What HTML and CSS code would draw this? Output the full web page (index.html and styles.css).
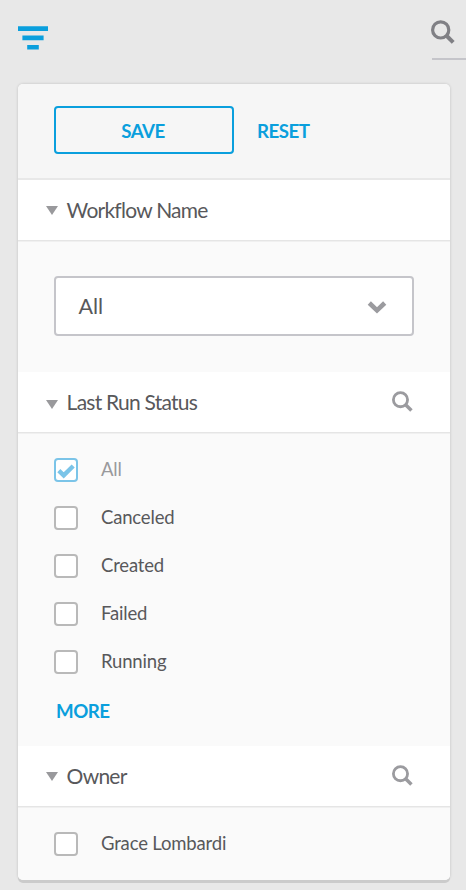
FILE: index.html
```html
<!DOCTYPE html>
<html lang="en">
<head>
<meta charset="utf-8">
<title>Workflow filters</title>
<link rel="stylesheet" href="styles.css">
</head>
<body>
<svg class="sprite" width="0" height="0">
  <symbol id="search" viewBox="0 0 24 24">
    <circle cx="9.7" cy="9.9" r="8.1" fill="none" stroke="currentColor" stroke-width="3.2"/>
    <path d="M15.3 15.5L22.2 22.4" fill="none" stroke="currentColor" stroke-width="4"/>
  </symbol>
  <symbol id="caret" viewBox="0 0 12 9"><path d="M0 0H12L6 9Z" fill="currentColor"/></symbol>
</svg>
<header class="topbar">
  <svg class="filter" viewBox="0 0 30 24"><path d="M0 .3H30V5H0ZM4.4 9.6H25.6V14.2H4.4ZM9.2 19H20.8V23.6H9.2Z" fill="currentColor"/></svg>
  <div class="search-field"><svg class="search-large"><use href="#search"/></svg></div>
</header>
<main class="panel">
  <div class="actions">
    <button class="save"><span>SAVE</span></button>
    <button class="link reset">RESET</button>
  </div>
  <section>
    <h2 class="heading"><svg class="caret"><use href="#caret"/></svg><span>Workflow Name</span></h2>
    <div class="body body-select">
      <div class="select"><span>All</span><svg class="chevron" viewBox="0 0 18 12"><path d="M1.3 2L9 9.4L16.7 2" fill="none" stroke="currentColor" stroke-width="4.6"/></svg></div>
    </div>
  </section>
  <section>
    <h2 class="heading"><svg class="caret caret-low"><use href="#caret"/></svg><span>Last Run Status</span><svg class="search-small"><use href="#search"/></svg></h2>
    <div class="body body-status">
      <div class="option checked"><span class="box"><svg viewBox="0 0 20 20"><path d="M2.8 10.7L7.7 15.4L17.2 6" fill="none" stroke="currentColor" stroke-width="4.4"/></svg></span><span class="label">All</span></div>
      <div class="option"><span class="box"></span><span class="label">Canceled</span></div>
      <div class="option"><span class="box"></span><span class="label">Created</span></div>
      <div class="option"><span class="box"></span><span class="label">Failed</span></div>
      <div class="option"><span class="box"></span><span class="label">Running</span></div>
      <button class="link more">MORE</button>
    </div>
  </section>
  <section>
    <h2 class="heading"><svg class="caret"><use href="#caret"/></svg><span>Owner</span><svg class="search-small"><use href="#search"/></svg></h2>
    <div class="body body-owner">
      <div class="option"><span class="box"></span><span class="label">Grace Lombardi</span></div>
    </div>
  </section>
</main>
</body>
</html>
```
FILE: styles.css
```css
* { box-sizing: border-box; }
body { margin: 0; height: 890px; overflow: hidden; background: #e8e8e8; color: #58585b; font-family: Lato, sans-serif; }
svg { display: block; flex: none; overflow: visible; }
.sprite { position: absolute; }
button { font: inherit; border: 0; background: none; padding: 0; }
.topbar { height: 84px; display: flex; justify-content: space-between; align-items: flex-start; padding-left: 18px; }
.filter { width: 30px; height: 24px; margin-top: 26px; color: #0a9fdd; }
.search-field { width: 34px; height: 60px; padding-top: 20px; border-bottom: 2px solid #c5c5ca; color: #808085; }
.search-large { width: 24px; height: 24px; margin-left: -1px; }
.panel { width: 432px; height: 796px; margin-left: 18px; border-radius: 5px; overflow: hidden; background: #fafafa; box-shadow: 0 3px 0 #cbcbcb, 0 0 3px rgba(0,0,0,.18); }
.actions { height: 96px; display: flex; align-items: flex-start; gap: 23px; padding: 22px 36px; background: #f6f6f6; border-bottom: 2px solid #e8e8e8; }
.save { width: 180px; height: 48px; border: 2px solid #0a9fdd; border-radius: 4px; }
.save, .link { color: #0a9fdd; font-size: 18.7px; line-height: 24px; font-weight: 700; letter-spacing: -.5px; }
.save { padding: 2px 2px 0 0; }
.reset { margin-top: 13px; }
.heading { margin: 0; height: 60px; display: flex; align-items: center; padding: 0 37px 0 28px; background: #fff; font-size: 21px; line-height: 30px; font-weight: 400; letter-spacing: -.75px; }
.caret { width: 12px; height: 9px; margin-right: 8.6px; color: #99999c; }
.caret-low { position: relative; top: 2px; }
.search-small { width: 21px; height: 21px; margin-left: auto; margin-bottom: 2px; color: #9b9b9f; }
.body { border-top: 1px solid #e5e5e5; box-shadow: inset 0 1px #f0f0f0; background: #fafafa; }
.body-select { height: 132px; padding: 35px 36px; }
.select { height: 60px; display: flex; align-items: center; justify-content: space-between; padding: 0 26px 0 22.5px; border: 2px solid #c5c5ca; border-radius: 4px; background: #fff; font-size: 21.5px; }
.chevron { width: 18px; height: 12px; margin-top: 2px; color: #9b9b9f; }
.body-status { height: 314px; padding: 13px 36px; }
.option { height: 48px; display: flex; align-items: center; gap: 23px; font-size: 18.5px; letter-spacing: -.17px; }
.label { padding-bottom: 2px; }
.box { width: 24px; height: 24px; border: 2px solid #b9b9b9; border-radius: 4px; background: #fff; }
.checked { color: #99999c; }
.checked .box { border-color: #7bc4e8; color: #7bc4e8; }
.more { display: block; margin: 13px 0 0 2px; }
.body-owner { height: 74px; padding: 13px 36px; }
```
